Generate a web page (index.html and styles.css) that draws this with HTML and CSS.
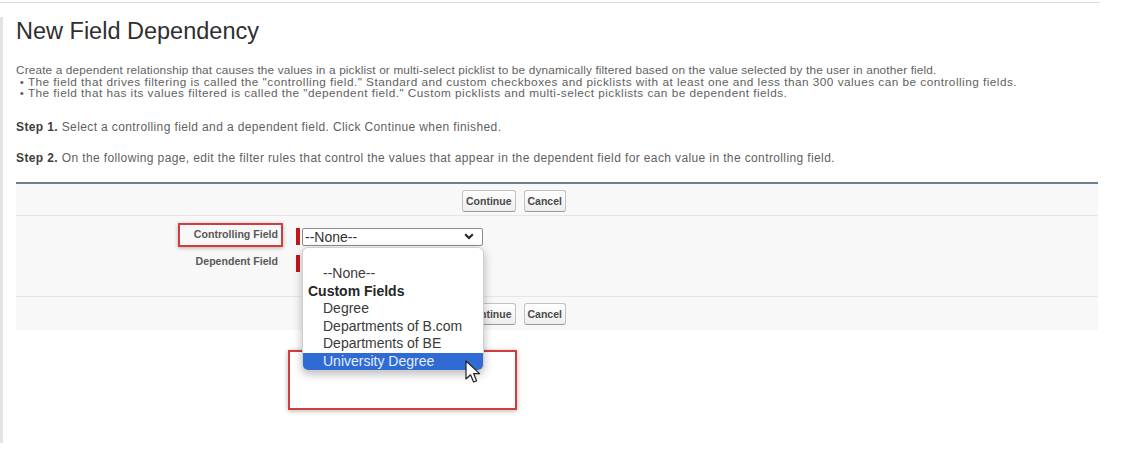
FILE: index.html
```html
<!DOCTYPE html>
<html>
<head>
<meta charset="utf-8">
<link rel="stylesheet" href="styles.css">
</head>
<body>
<div class="topline"></div>
<div class="frame">
  <h1 class="title">New Field Dependency</h1>
  <div class="desc">
    <div class="lead">Create a dependent relationship that causes the values in a picklist or multi-select picklist to be dynamically filtered based on the value selected by the user in another field.</div>
    <div>&nbsp;• The field that drives filtering is called the "controlling field." Standard and custom checkboxes and picklists with at least one and less than 300 values can be controlling fields.</div>
    <div>&nbsp;• The field that has its values filtered is called the "dependent field." Custom picklists and multi-select picklists can be dependent fields.</div>
  </div>
  <p class="step step1"><b>Step 1.</b> Select a controlling field and a dependent field. Click Continue when finished.</p>
  <p class="step step2"><b>Step 2.</b> On the following page, edit the filter rules that control the values that appear in the dependent field for each value in the controlling field.</p>

  <div class="panel">
    <div class="btnrow top">
      <span class="btn">Continue</span>
      <span class="btn">Cancel</span>
    </div>
    <div class="fields">
      <div class="frow r1">
        <div class="label"><span class="lbl-wrap">Controlling Field<span class="mark-label"></span></span></div>
        <div class="data">
          <span class="req"></span>
          <div class="selwrap">
            <div class="select">
              <span>--None--</span>
              <svg class="chev" width="10" height="7" viewBox="0 0 10 7"><path d="M1.2 1.2 L5 5 L8.8 1.2" fill="none" stroke="#222" stroke-width="2"/></svg>
            </div>
            <div class="dropdown">
              <div class="opt empty">&nbsp;</div>
              <div class="opt ind">--None--</div>
              <div class="opt grp">Custom Fields</div>
              <div class="opt ind">Degree</div>
              <div class="opt ind">Departments of B.com</div>
              <div class="opt ind">Departments of BE</div>
              <div class="opt ind sel">University Degree</div>
            </div>
          </div>
        </div>
      </div>
      <div class="frow r2">
        <div class="label">Dependent Field</div>
        <div class="data">
          <span class="req"></span>
          <div class="select dep"></div>
        </div>
      </div>
    </div>
    <div class="btnrow bottom">
      <span class="btn">Continue</span>
      <span class="btn">Cancel</span>
    </div>
    <div class="mark-box"></div>
    <svg class="cursor" width="17" height="25" viewBox="0 0 17 25"><path d="M1 1 L1 19 L5.5 14.8 L8.6 22 L11.6 20.7 L8.6 13.6 L14.6 13.6 Z" fill="#fff" stroke="#222" stroke-width="1.2" stroke-linejoin="round"/></svg>
  </div>
</div>
</body>
</html>
```

FILE: styles.css
```css
html, body {
  margin: 0;
  padding: 0;
  background: #ffffff;
}
body {
  font-family: "Liberation Sans", Arial, sans-serif;
  color: #555;
  width: 1122px;
  height: 460px;
  overflow: hidden;
}
.topline {
  margin-top: 2px;
  height: 1px;
  width: 1100px;
  background: #dcdcdc;
}
.frame {
  margin-top: 14px;
  height: 426px;
  border-left: 3px solid #e3e3e3;
  padding-left: 13px;
  box-sizing: border-box;
}
.title {
  margin: 0;
  font-weight: normal;
  font-size: 23.5px;
  line-height: 28px;
  color: #2f2f2f;
}
.desc {
  margin-top: 20px;
  font-size: 11.8px;
  letter-spacing: 0.47px;
  line-height: 11.5px;
  color: #5f5f5f;
  white-space: nowrap;
}
.desc .lead {
  letter-spacing: 0.15px;
}
.step {
  margin: 0;
  font-size: 12px;
  letter-spacing: 0.38px;
  line-height: 14px;
  color: #5f5f5f;
  white-space: nowrap;
}
.step b {
  color: #3d3d3d;
}
.step1 { margin-top: 20px; }
.step2 { margin-top: 17px; }

.panel {
  position: relative;
  margin-top: 17px;
  width: 1082px;
  background: #f8f8f8;
  border-top: 2px solid #6e7f95;
}
.btnrow {
  display: flex;
  gap: 8px;
  padding-left: 446px;
}
.btnrow.top {
  height: 32px;
  padding-top: 6px;
  box-sizing: border-box;
  border-bottom: 1px solid #e6e6e6;
}
.btnrow.bottom {
  height: 34px;
  padding-top: 6px;
  box-sizing: border-box;
  border-top: 1px solid #e6e6e6;
}
.btn {
  display: inline-flex;
  align-items: center;
  height: 22px;
  box-sizing: border-box;
  padding: 0 3px;
  border: 1px solid #c2c2c2;
  border-bottom-color: #9a9a9a;
  border-radius: 3px;
  background: linear-gradient(#ffffff, #eeeeee);
  font-size: 10.5px;
  font-weight: bold;
  color: #4a4a4a;
}
.fields {
  height: 80px;
  padding-top: 11px;
  box-sizing: border-box;
}
.frow {
  display: flex;
}
.frow.r2 {
  margin-top: 8px;
}
.label {
  width: 267px;
  padding-right: 5px;
  box-sizing: border-box;
  text-align: right;
  font-size: 10.6px;
  font-weight: bold;
  line-height: 14px;
  color: #585858;
}
.lbl-wrap {
  position: relative;
}
.mark-label {
  position: absolute;
  left: -16px;
  right: -5px;
  top: -5px;
  bottom: -7px;
  border: 2px solid #d23c3c;
  box-shadow: 0 1px 4px rgba(0,0,0,0.3);
}
.data {
  display: flex;
  padding-left: 13px;
  padding-top: 1px;
}
.req {
  width: 4px;
  height: 17px;
  background: #c0171d;
  margin-right: 2px;
}
.selwrap {
  position: relative;
}
.select {
  width: 181px;
  height: 18px;
  box-sizing: border-box;
  border: 1px solid #8c8c8c;
  border-radius: 2px;
  background: #fff;
  display: flex;
  align-items: center;
  justify-content: space-between;
  padding: 0 8px 0 2px;
  font-size: 14px;
  color: #333;
}
.select.dep {
  width: 150px;
}
.chev {
  display: block;
}
.dropdown {
  position: absolute;
  z-index: 3;
  left: 0;
  top: 19px;
  width: 180px;
  background: #fff;
  border: 1px solid #cfcfcf;
  border-radius: 6px;
  box-shadow: 0 3px 10px rgba(0,0,0,0.28);
  overflow: hidden;
}
.opt {
  height: 17.5px;
  line-height: 17.5px;
  font-size: 14px;
  color: #3a3a3a;
  padding-left: 5px;
  white-space: nowrap;
}
.opt.ind {
  padding-left: 20px;
}
.opt.grp {
  font-weight: bold;
  color: #262626;
}
.opt.sel {
  background: #2f6bd3;
  color: #e6eeff;
}
.mark-box {
  position: absolute;
  z-index: 2;
  left: 272px;
  top: 166px;
  width: 229px;
  height: 60px;
  box-sizing: border-box;
  border: 2px solid #d23c3c;
  box-shadow: 0 1px 5px rgba(0,0,0,0.3);
}
.cursor {
  position: absolute;
  z-index: 4;
  left: 449px;
  top: 176px;
}
```
